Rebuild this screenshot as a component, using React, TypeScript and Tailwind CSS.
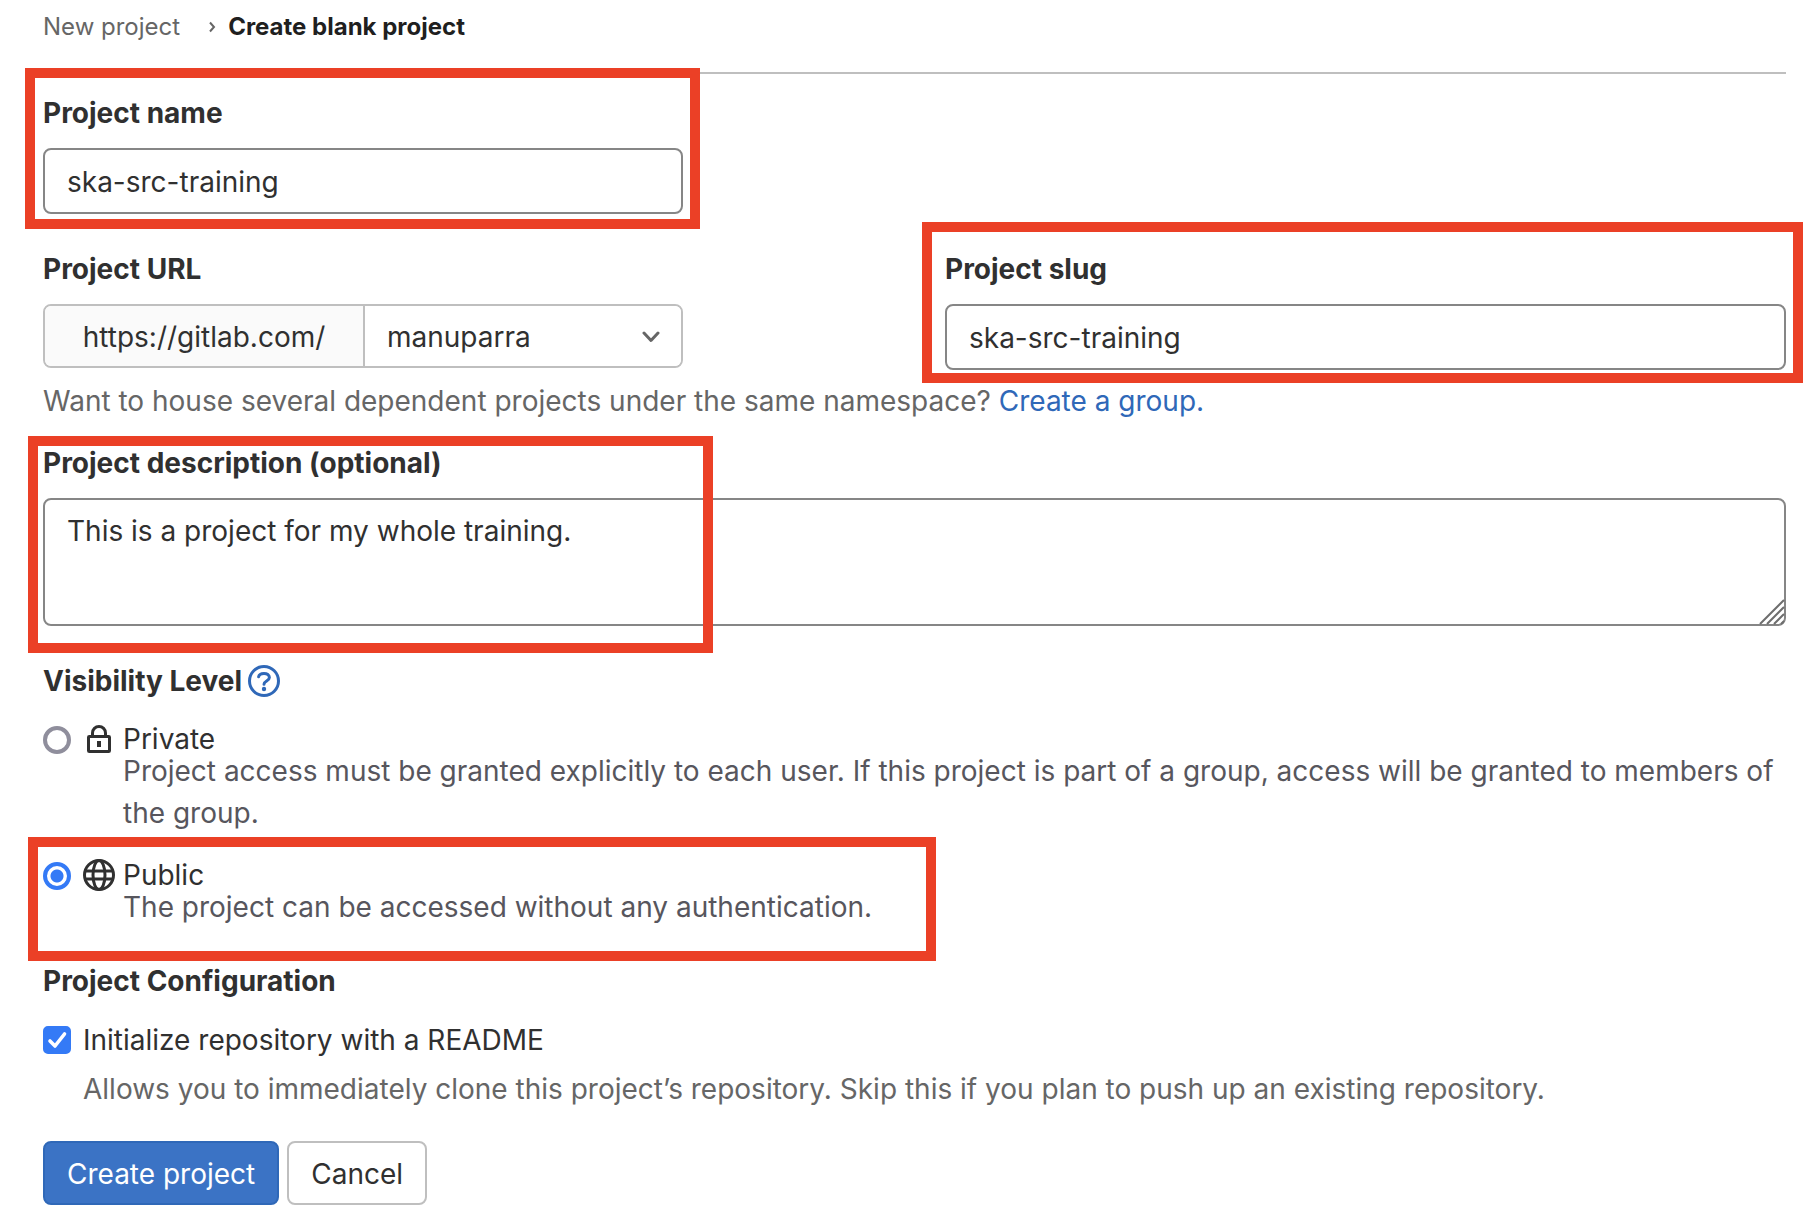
import type { ReactNode } from "react";

const labelClass = "block font-bold leading-[42px] text-[#303030]";
const inputClass =
  "mt-[14px] block h-[66px] w-full rounded-lg border-2 border-[#868686] bg-white px-[22px] pt-[2px] text-[#303030] outline-none";

function Highlight({ className }: { className: string }) {
  return (
    <div
      aria-hidden="true"
      className={`pointer-events-none absolute border-10 border-[#eb4026] ${className}`}
    />
  );
}

function LockIcon() {
  return (
    <svg viewBox="0 0 16 16" className="size-8 shrink-0" fill="none" stroke="#303030" strokeWidth="1.5" aria-hidden="true">
      <rect x="2.75" y="6.75" width="10.5" height="7.5" rx="0.4" />
      <path d="M4.75 6.5V5a3.25 3.25 0 0 1 6.5 0v1.5" />
      <path d="M8 9v3" strokeWidth="2" />
    </svg>
  );
}

function EarthIcon() {
  return (
    <svg viewBox="0 0 16 16" className="size-8 shrink-0" fill="none" stroke="#303030" strokeWidth="1.5" aria-hidden="true">
      <circle cx="8" cy="8" r="7.25" />
      <ellipse cx="8" cy="8" rx="3" ry="7.25" />
      <path d="M1 6h14M1 10h14" strokeWidth="1.4" />
    </svg>
  );
}

function HelpIcon() {
  return (
    <svg viewBox="0 0 16 16" className="size-8" fill="none" stroke="#2f68b8" strokeWidth="1.5" aria-hidden="true">
      <circle cx="8" cy="8" r="7.25" />
      <path d="M5.3 5.9C5.5 4.9 6.6 4.2 8 4.2c1.5 0 2.7.8 2.7 2.1C10.7 8 8 8 8 9.6" strokeLinecap="round" />
      <circle cx="8" cy="12" r="1.1" fill="#2f68b8" stroke="none" />
    </svg>
  );
}

type VisibilityProps = {
  id: string;
  title: string;
  icon: ReactNode;
  checked?: boolean;
  children: ReactNode;
};

function VisibilityOption({ id, title, icon, checked, children }: VisibilityProps) {
  return (
    <div>
      <div className="flex h-[22px] items-center">
        <input
          type="radio"
          id={id}
          name="visibility"
          defaultChecked={checked}
          aria-describedby={`${id}-help`}
          className="mt-[2px] size-7 shrink-0 appearance-none rounded-full border-4 border-[#8f8e9c] bg-white checked:border-[#347af6] checked:bg-[radial-gradient(circle,#347af6_6px,#fff_7px)]"
        />
        <label htmlFor={id} className="ml-3 flex items-center gap-2 text-[#303030]">
          {icon}
          {title}
        </label>
      </div>
      <p id={`${id}-help`} className="ml-20 leading-[42px] text-[#57565d]">
        {children}
      </p>
    </div>
  );
}

export default function App() {
  return (
    <main className="min-h-screen bg-white pr-8 pb-[18px] pl-[43px] font-['Inter','Liberation_Sans',sans-serif] text-[28px]">
      <nav aria-label="Breadcrumb" className="border-b-2 border-[#bfbfbf] pt-[6px] pb-6">
        <ol className="flex items-center text-2xl leading-[42px]">
          <li>
            <a href="#new" className="text-[#666]">New project</a>
          </li>
          <li className="ml-7 flex items-center gap-3">
            <svg viewBox="0 0 8 12" className="h-3 w-2" fill="none" stroke="#666" strokeWidth="2" aria-hidden="true">
              <path d="M2 1.5 6 6l-4 4.5" />
            </svg>
            <span aria-current="page" className="font-bold text-[#1f1f1f]">Create blank project</span>
          </li>
        </ol>
      </nav>

      <form onSubmit={(e) => e.preventDefault()}>
        <div className="relative mt-[18px] w-full max-w-[640px]">
          <label htmlFor="name" className={labelClass}>Project name</label>
          <input id="name" type="text" defaultValue="ska-src-training" className={inputClass} />
          <Highlight className="-top-6 -right-[17px] -bottom-[15px] -left-[18px]" />
        </div>

        <div className="mt-[34px] grid grid-cols-[902fr_841fr]">
          <div>
            <label htmlFor="namespace" className={labelClass}>Project URL</label>
            <div className="mt-[14px] flex h-16 w-full max-w-[640px] overflow-hidden rounded-lg border-2 border-[#bfbfbf] text-[#303030]">
              <span className="flex w-[320px] items-center justify-center border-r-2 border-[#bfbfbf] bg-[#fafafa] pt-[2px]">
                https://gitlab.com/
              </span>
              <span className="relative flex-1">
                <select id="namespace" className="h-full w-full appearance-none bg-white px-[22px] pt-[2px] outline-none">
                  <option>manuparra</option>
                </select>
                <svg viewBox="0 0 18 12" className="pointer-events-none absolute top-[25px] right-[21px] h-3 w-[18px]" fill="none" stroke="#666" strokeWidth="3" strokeLinecap="round" strokeLinejoin="round" aria-hidden="true">
                  <path d="M2 2l7 7.5L16 2" />
                </svg>
              </span>
            </div>
          </div>
          <div className="relative">
            <label htmlFor="slug" className={labelClass}>Project slug</label>
            <input id="slug" type="text" defaultValue="ska-src-training" className={inputClass} />
            <Highlight className="-top-[26px] -right-[17px] -bottom-[13px] -left-[23px]" />
          </div>
        </div>
        <p className="mt-[10px] leading-[42px] text-[#666]">
          Want to house several dependent projects under the same namespace?{" "}
          <a href="#group" className="text-[#2f68b8]">Create a group.</a>
        </p>

        <div className="relative mt-5">
          <label htmlFor="description" className={labelClass}>Project description (optional)</label>
          <div className="relative mt-[14px]">
            <textarea
              id="description"
              defaultValue="This is a project for my whole training."
              className="block h-32 w-full resize-none rounded-lg border-2 border-[#868686] bg-white px-[22px] py-[10px] leading-[42px] text-[#303030] outline-none"
            />
            <svg viewBox="0 0 26 26" className="pointer-events-none absolute right-px bottom-px size-[26px]" fill="none" stroke="#6e6e6e" strokeWidth="2" aria-hidden="true">
              <path d="M1 25 25 1M8 25 25 8M15 25 25 15M22 25 25 22" />
            </svg>
          </div>
          <Highlight className="-top-[6px] -bottom-[27px] -left-[15px] w-[685px]" />
        </div>

        <fieldset className="mt-[34px]">
          <legend className="flex items-center gap-[6px] font-bold leading-[42px] text-[#303030]">
            Visibility Level
            <a href="#visibility" aria-label="Visibility help">
              <HelpIcon />
            </a>
          </legend>
          <div className="mt-[26px]">
            <VisibilityOption id="private" title="Private" icon={<LockIcon />}>
              Project access must be granted explicitly to each user. If this project is part of a group, access will be granted to members of the group.
            </VisibilityOption>
          </div>
          <div className="relative mt-[30px]">
            <VisibilityOption id="public" title="Public" icon={<EarthIcon />} checked>
              The project can be accessed without any authentication.
            </VisibilityOption>
            <Highlight className="-top-[27px] -bottom-[33px] -left-[15px] w-[908px]" />
          </div>
        </fieldset>

        <fieldset className="mt-8">
          <legend className={labelClass}>Project Configuration</legend>
          <div className="mt-[17px] flex items-center gap-3 leading-[42px]">
            <span className="relative size-7 shrink-0">
              <input
                id="readme"
                type="checkbox"
                defaultChecked
                aria-describedby="readme-help"
                className="peer block size-7 appearance-none rounded-[5px] border-2 border-[#8f8e9c] bg-white checked:border-[#347af6] checked:bg-[#347af6]"
              />
              <svg viewBox="0 0 28 28" className="pointer-events-none absolute inset-0 hidden size-7 peer-checked:block" fill="none" stroke="#fff" strokeWidth="3.6" strokeLinecap="round" strokeLinejoin="round" aria-hidden="true">
                <path d="M7 15 12 20 21.5 8" />
              </svg>
            </span>
            <label htmlFor="readme" className="text-[#303030]">Initialize repository with a README</label>
          </div>
          <p id="readme-help" className="mt-[7px] ml-10 leading-[42px] text-[#666]">
            Allows you to immediately clone this project’s repository. Skip this if you plan to push up an existing repository.
          </p>
        </fieldset>

        <div className="mt-[31px] flex gap-2">
          <button type="submit" className="h-16 rounded-lg border-2 border-[#2f68b8] bg-[#3b73c5] px-[22px] pt-[2px] text-white">
            Create project
          </button>
          <button type="button" className="h-16 rounded-lg border-2 border-[#bfbfbf] bg-white px-[22px] pt-[2px] text-[#303030]">
            Cancel
          </button>
        </div>
      </form>
    </main>
  );
}
